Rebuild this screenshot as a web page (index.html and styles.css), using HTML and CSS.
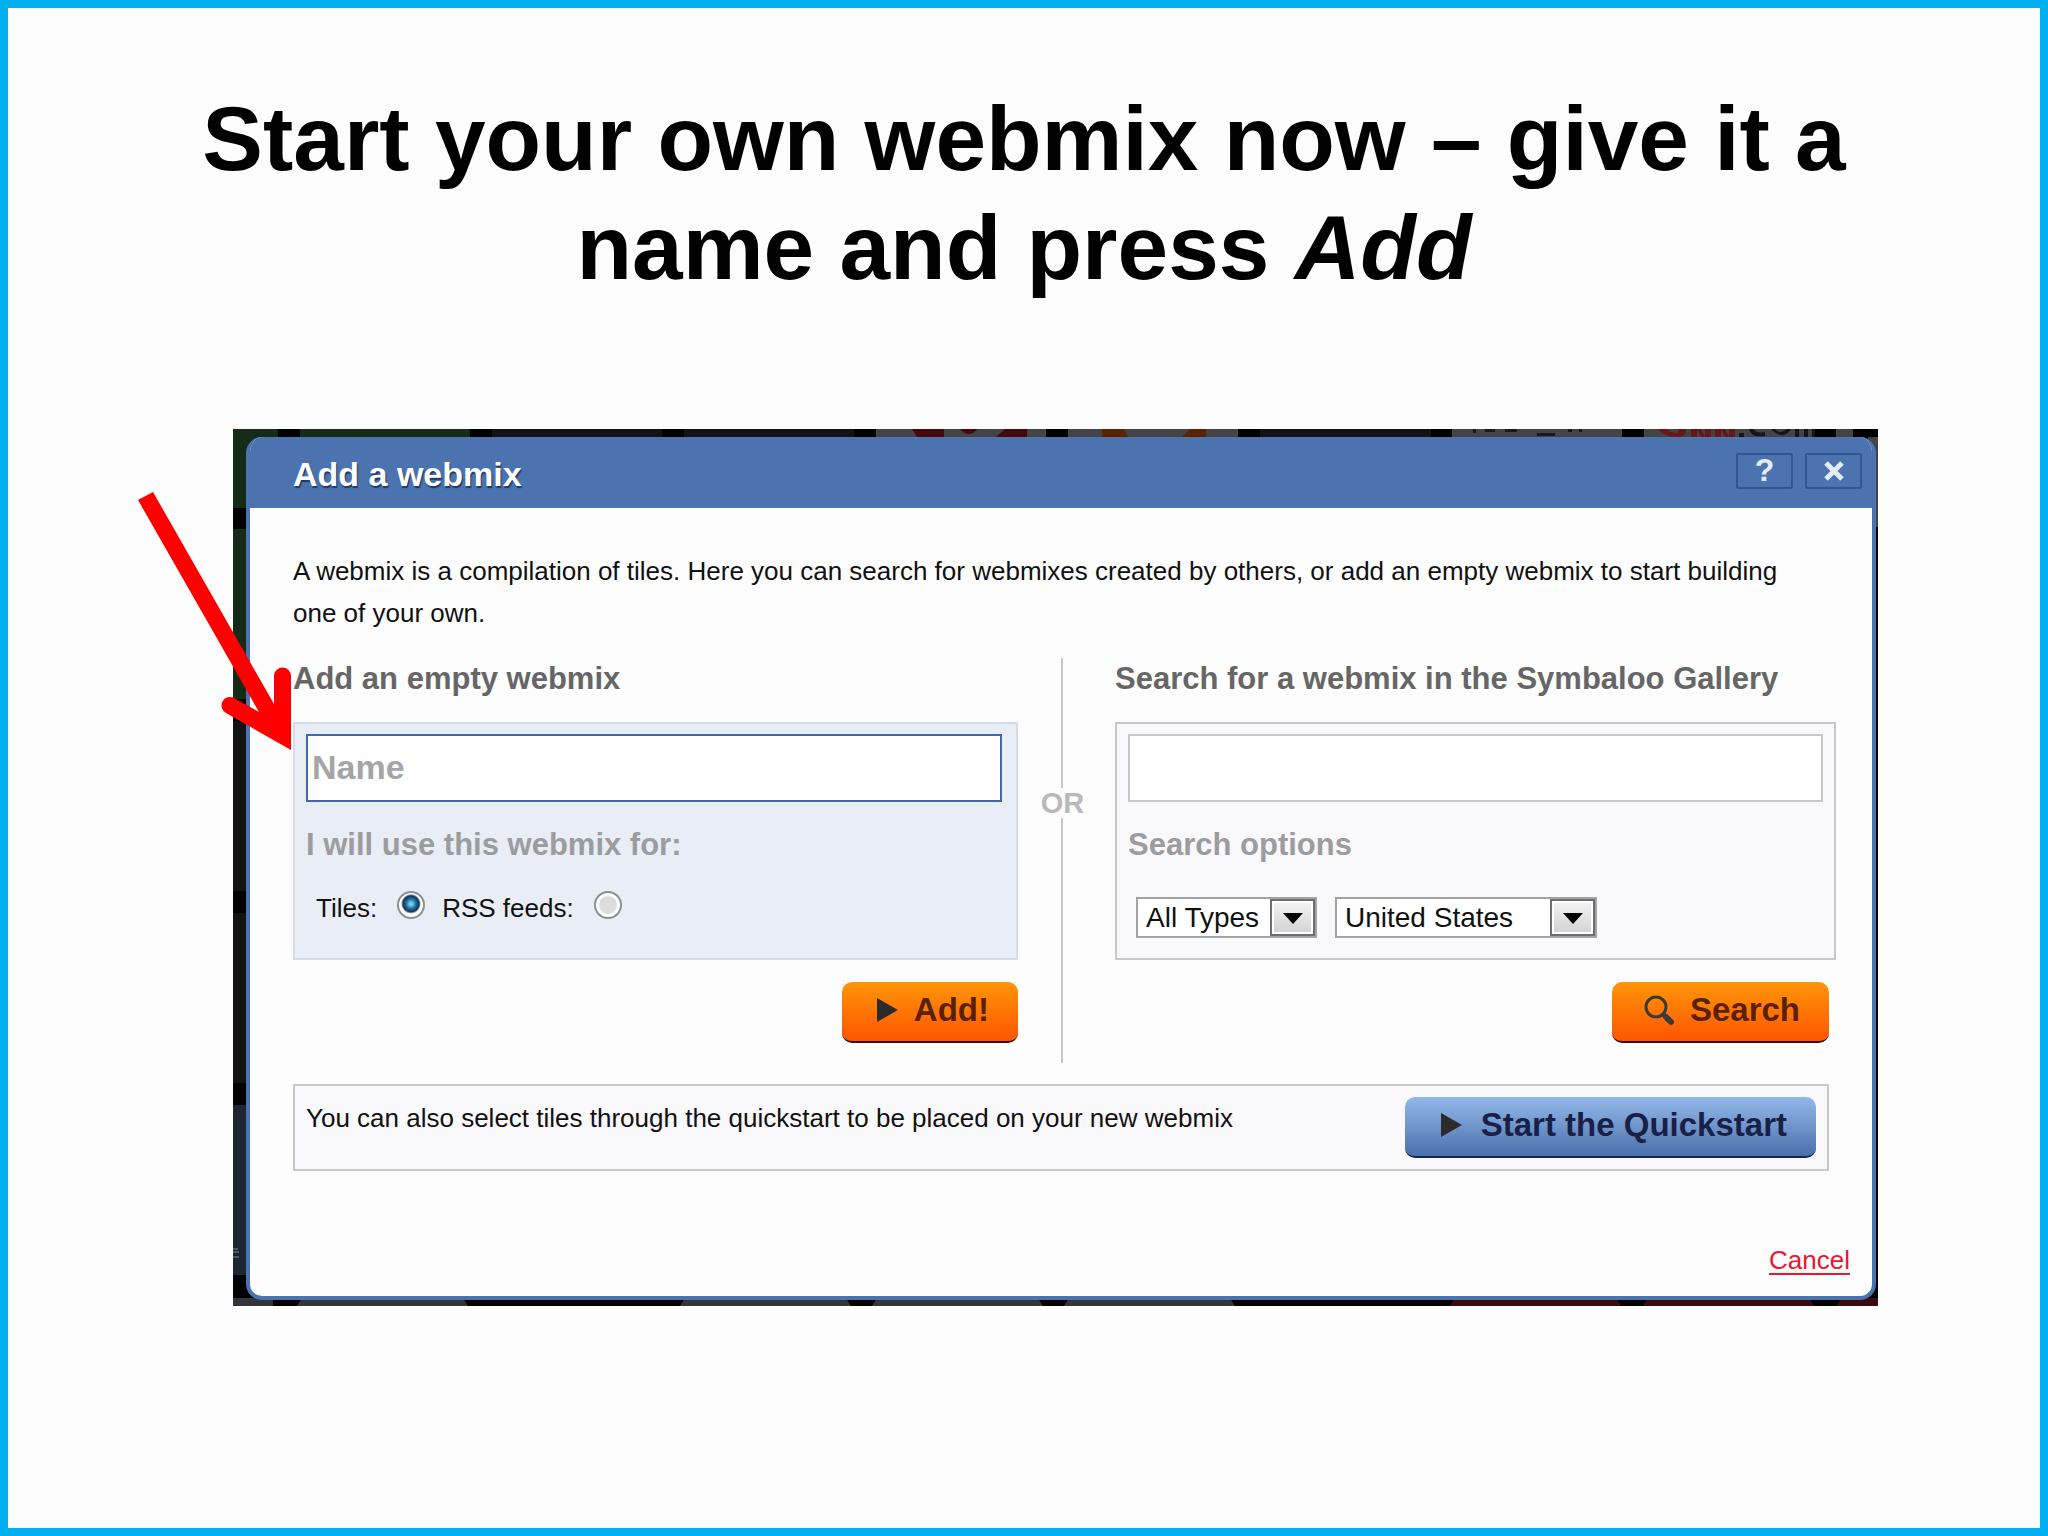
FILE: index.html
```html
<!DOCTYPE html>
<html lang="en">
<head>
    <meta charset="UTF-8">
    <meta name="viewport" content="width=device-width, initial-scale=1.0">
    <title>Start your own webmix</title>
    <link rel="stylesheet" href="styles.css">
</head>
<body>
<main class="slide">
    <h1 class="slide-title">Start your own webmix now – give it a<br>name and press <em>Add</em></h1>

    <div class="screen">
        <!-- Darkened tiles behind the dialog -->
        <svg class="tiles" viewBox="0 0 1645 877" preserveAspectRatio="none" aria-hidden="true">
            <rect width="1645" height="877" fill="#000"/>
            <g fill="#152b18">
                <rect width="45" height="79"/>
                <rect x="67" width="170" height="8"/>
                <rect y="100" width="13" height="170"/>
            </g>
            <g fill="#131316">
                <rect x="259" width="170" height="8"/>
                <rect x="451" width="170" height="8"/>
                <rect x="1027" width="171" height="8"/>
                <rect y="292" width="13" height="170"/>
                <rect y="484" width="13" height="170"/>
            </g>
            <g fill="#444446">
                <rect x="643" width="170" height="8"/>
                <rect x="835" width="170" height="8"/>
                <rect x="1219" width="170" height="8"/>
                <rect x="1411" width="171" height="8"/>
                <rect x="1603" width="17" height="8"/>
                <rect x="1635" y="8" width="10" height="90"/>
            </g>
            <rect y="676" width="13" height="170" fill="#1b2533"/>
            <path d="M679 0h32v8h-27zM727 0h17q-3 5-8 5t-9-5zM772 0h22v8h-31z" fill="#45090c"/>
            <path d="M869 0h22l4 8h-26zM957 0h16v8h-24z" fill="#5a2400"/>
            <path d="M1240 0h3v4h-3zM1252 0h10v3h-10zM1272 0h12v3h-12zM1304 4h18v3h-18zM1335 0h4v3h-4zM1346 0h3v3h-3z" fill="#19191b"/>
            <path d="M1425 0h8q5 4 12 4V0h8q0 8-8 8-14 0-20-8zM1458 0h6v8h-6zM1464 0h4l4 8h-4zM1472 0h6v8h-6zM1482 0h6v8h-6zM1488 0h4l4 8h-4zM1496 0h6v8h-6z" fill="#6a1518"/>
            <path d="M1506 4h5v4h-5zM1516 0h4q4 5 12 3v4q-14 2-16-7zM1538 0h4q5 6 12 0h4q-8 12-20 0zM1562 0h4v8h-4zM1571 0h4v8h-4zM1579 0h3v8h-3z" fill="#151515"/>
            <g fill="#34343a">
                <rect y="869" width="40" height="8"/>
                <path d="M69 869h161l5 8H64zM452 869h161l5 8H447zM644 869h161l5 8H639zM836 869h161l5 8H831z"/>
            </g>
            <path d="M1222 869h161l5 8h-171zM1415 869h161l5 8h-171zM1608 869h37v8h-42z" fill="#3a0c10"/>
            <path d="M0 820h5M0 823h6M0 828h6" stroke="#55555a" stroke-width="2"/>
        </svg>

        <section class="dialog" aria-labelledby="dialog-title">
            <header class="dialog-header">
                <h2 id="dialog-title">Add a webmix</h2>
                <div class="window-buttons">
                    <button type="button" aria-label="Help">?</button>
                    <button type="button" aria-label="Close">
                        <svg width="22" height="22" viewBox="0 0 22 22"><path d="M3 3l16 16M19 3L3 19" stroke="#e3ecf8" stroke-width="5"/></svg>
                    </button>
                </div>
            </header>

            <form class="dialog-body">
                <p class="intro">A webmix is a compilation of tiles. Here you can search for webmixes created by others, or add an empty webmix to start building one of your own.</p>

                <div class="columns">
                    <div class="column">
                        <h3>Add an empty webmix</h3>
                        <div class="panel panel-add">
                            <input class="text-box" type="text" placeholder="Name" aria-label="Name">
                            <h4>I will use this webmix for:</h4>
                            <div class="radios">
                                <label for="tiles">Tiles:</label>
                                <input type="radio" id="tiles" name="use" checked>
                                <label for="rss">RSS feeds:</label>
                                <input type="radio" id="rss" name="use">
                            </div>
                        </div>
                        <button type="button" class="btn btn-orange">
                            <svg width="22" height="26" viewBox="0 0 22 26"><path d="M0 1l21 12L0 25z" fill="#2b2b2b"/></svg>
                            Add!
                        </button>
                    </div>

                    <div class="divider"><span>OR</span></div>

                    <div class="column">
                        <h3>Search for a webmix in the Symbaloo Gallery</h3>
                        <div class="panel">
                            <input class="text-box" type="text" aria-label="Search for a webmix">
                            <h4>Search options</h4>
                            <div class="selects">
                                <span class="select">
                                    <select class="select-type" aria-label="Type"><option>All Types</option></select>
                                    <span class="select-arrow"><svg width="20" height="12" viewBox="0 0 20 12"><path d="M0 1h20L10 12z"/></svg></span>
                                </span>
                                <span class="select">
                                    <select class="select-country" aria-label="Country"><option>United States</option></select>
                                    <span class="select-arrow"><svg width="20" height="12" viewBox="0 0 20 12"><path d="M0 1h20L10 12z"/></svg></span>
                                </span>
                            </div>
                        </div>
                        <button type="button" class="btn btn-orange btn-search">
                            <svg width="32" height="32" viewBox="0 0 32 32" fill="none" stroke="#3a3a3a">
                                <circle cx="13" cy="13" r="10" stroke-width="3"/>
                                <path d="M20 20l3 3" stroke-width="4"/>
                                <path d="M23 23l5 5" stroke-width="6" stroke-linecap="round"/>
                            </svg>
                            Search
                        </button>
                    </div>
                </div>

                <div class="quickstart">
                    <p>You can also select tiles through the quickstart to be placed on your new webmix</p>
                    <button type="button" class="btn btn-blue">
                        <svg width="22" height="26" viewBox="0 0 22 26"><path d="M0 1l21 12L0 25z" fill="#2b2b2b"/></svg>
                        Start the Quickstart
                    </button>
                </div>

                <a class="cancel" href="#">Cancel</a>
            </form>
        </section>

        <!-- Red pointer to the name box -->
        <svg class="arrow" width="153" height="258" viewBox="0 0 153 258" aria-hidden="true">
            <path d="M0 8L15 0L136 212V184a8.500 8.500 0 0 1 17 0V258L88 221a8.500 8.500 0 0 1 8-15L121 220z" fill="#f00"/>
        </svg>
    </div>
</main>
</body>
</html>
```
FILE: styles.css
```css
* {
    box-sizing: border-box;
}
body {
    margin: 0;
    font-family: "Liberation Sans", Arial, sans-serif;
    font-size: 26px;
    line-height: 42px;
    color: #111;
}
h1, h2, h3, h4, p {
    margin: 0;
}
button, input, select {
    font-family: inherit;
}

.slide {
    min-height: 100vh;
    padding: 76px 162px 76px 225px;
    border: 8px solid #00b0f0;
    background-color: #fdfdfd;
}
.slide-title {
    margin: 0 0 127px -63px;
    font-size: 91px;
    font-weight: bold;
    line-height: 109px;
    text-align: center;
    color: #000;
}

.screen {
    position: relative;
    padding: 8px 2px 6px 13px;
}
.tiles {
    position: absolute;
    top: 0;
    left: 0;
    width: 100%;
    height: 100%;
}
.arrow {
    position: absolute;
    top: 63px;
    left: -95px;
}

/* Dialog */
.dialog {
    position: relative;
    border: 4px solid #4b73af;
    border-top: 0;
    border-radius: 16px;
    background-color: #fdfdfd;
    overflow: hidden;
}
.dialog-header {
    display: flex;
    justify-content: space-between;
    align-items: center;
    height: 71px;
    padding: 0 10px 0 43px;
    background-color: #4b73af;
}
.dialog-header h2 {
    padding-top: 2px;
    font-size: 34px;
    color: #fff;
    text-shadow: 1px 2px 1px #1f3963;
}
.window-buttons {
    display: flex;
    gap: 12px;
    padding-bottom: 4px;
}
.window-buttons button {
    display: flex;
    align-items: center;
    justify-content: center;
    width: 57px;
    height: 36px;
    padding: 0;
    border: 2px solid #2f5794;
    border-radius: 2px;
    background: none;
    font-size: 32px;
    font-weight: bold;
    color: #e3ecf8;
}
.dialog-body {
    display: flex;
    flex-direction: column;
    padding: 42px 36px 15px 43px;
}
.intro {
    margin-bottom: 24px;
    padding-right: 36px;
}

.columns {
    display: grid;
    grid-template-columns: 725fr 97px 721fr;
}
.column {
    display: flex;
    flex-direction: column;
    padding-bottom: 20px;
}
h3, h4 {
    font-size: 31px;
}
h3 {
    margin-bottom: 22px;
    color: #666;
}
h4 {
    margin-top: 22px;
    color: #9c9c9e;
}
.panel {
    flex: 1;
    padding: 10px 11px 20px;
    border: 2px solid #c8c8cb;
    background-color: #f9f8fb;
}
.panel-add {
    padding-right: 14px;
    border-color: #d3deea;
    background-color: #e9edf6;
}
.text-box {
    display: block;
    width: 100%;
    height: 68px;
    padding: 0 4px 2px;
    border: 2px solid #c8c8cb;
    background-color: #fff;
    font-size: 34px;
    font-weight: bold;
}
.panel-add .text-box {
    border-color: #4168a8;
}
.text-box::placeholder {
    color: #a5a5a7;
    opacity: 1;
}
.radios {
    display: flex;
    align-items: center;
    padding: 21px 10px 0;
}
.radios input {
    appearance: none;
    width: 28px;
    height: 28px;
    margin: 0 17px 7px 20px;
    border: 2px solid #8d8f91;
    border-radius: 50%;
    background: radial-gradient(circle, #dcdcdc 0 8px, #fff 10px);
}
.radios input:checked {
    background: radial-gradient(circle at 50% 45%, #7fd0ee 0 1px, #1c6f9d 5px, #12344f 8px, #fff 10px);
}
.selects {
    display: flex;
    gap: 18px;
    padding: 31px 8px 0;
}
.select {
    position: relative;
    display: flex;
}
.select select {
    appearance: none;
    height: 41px;
    padding: 0 48px 0 8px;
    border: 2px solid #a3a3a6;
    border-radius: 0;
    background-color: #fff;
    font-size: 28px;
    color: #111;
}
.select-type {
    width: 181px;
}
.select-country {
    width: 262px;
}
.select-arrow {
    position: absolute;
    top: 2px;
    right: 2px;
    display: flex;
    align-items: center;
    justify-content: center;
    width: 45px;
    height: 37px;
    border: 2px solid #6e6e70;
    background: linear-gradient(#f4f4f4, #d2d2d4);
    box-shadow: inset 0 0 0 2px #fff;
    pointer-events: none;
}

/* Buttons */
.btn {
    display: flex;
    align-items: center;
    height: 61px;
    padding: 0 29px 4px 35px;
    gap: 15px;
    border: 0;
    border-bottom: 2px solid #3a0b00;
    border-radius: 10px;
    font-size: 33px;
    font-weight: bold;
    white-space: nowrap;
}
.btn-orange {
    align-self: flex-end;
    margin-top: 22px;
    background: linear-gradient(#ff9608, #ff5500);
    color: #5a2100;
}
.btn-search {
    margin-right: 7px;
    padding-left: 31px;
}
.btn-blue {
    padding-left: 36px;
    gap: 18px;
    border-bottom-color: #16264f;
    background: linear-gradient(#93b9ea, #4b70ac);
    color: #1a1f47;
}

.divider {
    display: flex;
    align-items: center;
    justify-content: center;
    padding-bottom: 115px;
    background: linear-gradient(#c8c8cb, #c8c8cb) 43px 0 / 2px 100% no-repeat;
    font-size: 29px;
    font-weight: bold;
    line-height: 30px;
    color: #b9b9bc;
}
.divider span {
    margin-right: 8px;
    background-color: #fdfdfd;
}

.quickstart {
    display: flex;
    justify-content: space-between;
    align-items: flex-start;
    margin: 21px 7px 68px 0;
    padding: 11px;
    border: 2px solid #c8c8cb;
    background-color: #f9f8fb;
}
.cancel {
    align-self: flex-end;
    margin-right: -14px;
    color: #f0142f;
    text-underline-offset: 4px;
}
```
